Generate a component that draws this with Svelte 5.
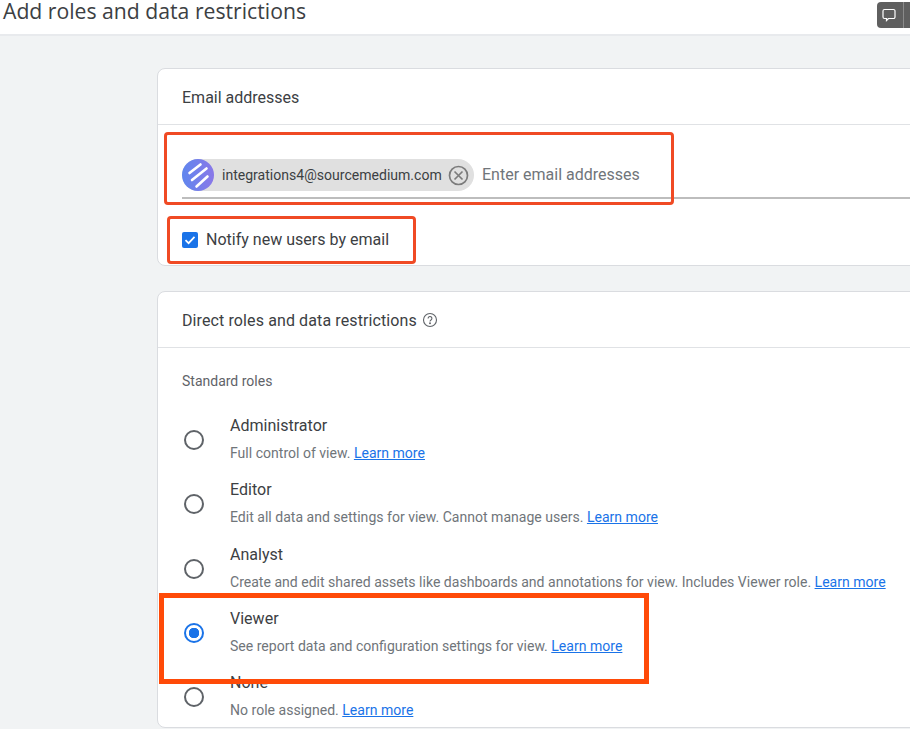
<script>
	const roles = [
		{ name: 'Administrator', desc: 'Full control of view.' },
		{ name: 'Editor', desc: 'Edit all data and settings for view. Cannot manage users.' },
		{
			name: 'Analyst',
			desc: 'Create and edit shared assets like dashboards and annotations for view. Includes Viewer role.'
		},
		{ name: 'Viewer', desc: 'See report data and configuration settings for view.', checked: true },
		{ name: 'None', desc: 'No role assigned.' }
	];
</script>

<div class="page">
	<header class="topbar">
		<h1>Add roles and data restrictions</h1>
		<div class="feedback">
			<svg width="16" height="16" viewBox="0 0 16 16" fill="none" stroke="#fff" stroke-width="1.2">
				<path d="M3.500 2.500h9a1.500 1.500 0 0 1 1.500 1.500v6a1.500 1.500 0 0 1-1.500 1.500H7.500l-2 2v-2h-2A1.500 1.500 0 0 1 2 10V4a1.500 1.500 0 0 1 1.500-1.500z" />
			</svg>
			<span class="divider"></span>
		</div>
	</header>

	<main class="content">
		<section class="card email-card">
			<h2 class="card-head">Email addresses</h2>
			<div class="email-field">
				<div class="chip">
					<span class="avatar">
						<svg width="32" height="32" viewBox="0 0 32 32" stroke="#fff" stroke-width="2.600" stroke-linecap="round">
							<path d="M7.500 14 18.500 5.500M10 21 24.500 9.500M14.500 27.500 25.500 17.500" />
						</svg>
					</span>
					<span class="chip-text">integrations4@sourcemedium.com</span>
					<svg class="chip-x" width="21" height="21" viewBox="0 0 21 21" fill="none" stroke="#7b7b7b" stroke-width="1.700">
						<circle cx="10.500" cy="10.500" r="9" />
						<path d="M6.500 6.500l8 8M14.500 6.500l-8 8" />
					</svg>
				</div>
				<span class="placeholder">Enter email addresses</span>
			</div>
			<label class="notify">
				<span class="checkbox">
					<svg width="16" height="16" viewBox="0 0 16 16" fill="none" stroke="#fff" stroke-width="1.700">
						<path d="M3.500 8.200 6.600 11.200 12.500 4.800" />
					</svg>
				</span>
				Notify new users by email
			</label>
		</section>

		<section class="card roles-card">
			<h2 class="card-head direct">
				Direct roles and data restrictions
				<svg width="16" height="16" viewBox="0 0 16 16" fill="none" stroke="#5f6368" stroke-width="1.100">
					<circle cx="8" cy="8" r="6.500" />
					<path d="M6.100 6.400a1.900 1.900 0 1 1 2.900 1.600c-.7.450-1 .8-1 1.500" />
					<circle cx="8" cy="11.300" r=".4" fill="#5f6368" />
				</svg>
			</h2>
			<div class="roles-body">
				<h3>Standard roles</h3>
				{#each roles as role}
					<div class="role">
						<span class="radio" class:checked={role.checked}></span>
						<div class="role-text">
							<div class="role-name">{role.name}</div>
							<div class="role-desc">{role.desc} <a href="#top">Learn more</a></div>
						</div>
					</div>
				{/each}
			</div>
		</section>
	</main>

	<!-- annotations drawn over the screenshot -->
	<div class="mark mark-email"></div>
	<div class="mark mark-notify"></div>
	<div class="mark mark-viewer"></div>
</div>

<style>
	:global(body) {
		margin: 0;
		background: #f1f3f4;
		font-family: Roboto, 'Liberation Sans', sans-serif;
		color: #3c4043;
	}

	.page {
		position: relative;
		width: 910px;
		height: 729px;
		overflow: hidden;
		background: #f1f3f4;
	}

	.topbar {
		height: 34px;
		background: #fff;
		border-bottom: 2px solid #e8eaed;
		display: flex;
		justify-content: space-between;
		align-items: flex-start;
	}

	h1 {
		margin: 0 0 0 3px;
		font-family: 'Open Sans', sans-serif;
		font-size: 21.2px;
		line-height: 22px;
		font-weight: 400;
		color: #3c4043;
	}

	.feedback {
		width: 33px;
		height: 26px;
		margin-top: 2px;
		background: #5f5f5f;
		border-radius: 4px 0 0 4px;
		display: flex;
		align-items: center;
		padding-left: 4px;
		box-sizing: border-box;
	}

	.divider {
		width: 1px;
		height: 26px;
		margin-left: 6px;
		background: #8a8a8a;
	}

	.content {
		width: 800px;
		margin-left: 157px;
		padding-top: 32px;
		display: flex;
		flex-direction: column;
		gap: 25px;
	}

	.card {
		background: #fff;
		border: 1px solid #dadce0;
		border-radius: 8px;
		box-sizing: border-box;
	}

	.card-head {
		height: 54px;
		margin: 0;
		padding: 1px 0 0 24px;
		display: flex;
		align-items: center;
		gap: 5px;
		font-size: 16px;
		font-weight: 400;
		color: #3c4043;
		border-bottom: 1px solid #e0e2e5;
	}

	.direct {
		letter-spacing: 0.11px;
	}

	.email-card {
		height: 198px;
	}

	.email-field {
		margin: 34px 0 0 24px;
		width: 756px;
		height: 40px;
		border-bottom: 2px solid #bdbdbd;
		display: flex;
		gap: 8px;
		box-sizing: border-box;
	}

	.chip {
		height: 32px;
		width: 292px;
		flex: none;
		border-radius: 16px;
		background: #e0e0e0;
		display: flex;
		align-items: center;
	}

	.avatar {
		width: 32px;
		height: 32px;
		flex: none;
		border-radius: 50%;
		background: linear-gradient(90deg, #5f86ee, #8a78e8);
	}

	.avatar svg {
		display: block;
	}

	.chip-text {
		margin-left: 8px;
		font-size: 14.05px;
		color: #3c4043;
	}

	.chip-x {
		margin-left: 6px;
		flex: none;
	}

	.placeholder {
		line-height: 32px;
		font-size: 16px;
		color: #70757a;
	}

	.notify {
		margin: 31px 0 0 24px;
		display: flex;
		align-items: center;
		gap: 8px;
		font-size: 16.05px;
		color: #3c4043;
	}

	.checkbox {
		width: 16px;
		height: 16px;
		border-radius: 2px;
		background: #1a73e8;
	}

	.checkbox svg {
		display: block;
	}

	.roles-card {
		height: 437px;
	}

	.roles-body {
		padding: 25px 0 0 24px;
	}

	h3 {
		margin: 0 0 19px;
		font-size: 14px;
		line-height: 16px;
		font-weight: 400;
		color: #5f6368;
	}

	.role {
		height: 64.25px;
		display: flex;
		align-items: center;
		gap: 26px;
		padding-left: 2px;
	}

	.radio {
		width: 20px;
		height: 20px;
		flex: none;
		border: 2px solid #5f6368;
		border-radius: 50%;
		box-sizing: border-box;
	}

	.radio.checked {
		border-color: #1a73e8;
		background: radial-gradient(circle, #1a73e8 0 5px, #fff 5.500px);
	}

	.role-text {
		padding-bottom: 3px;
	}

	.role-name {
		font-size: 16.05px;
		line-height: 24px;
		color: #3c4043;
	}

	.role-desc {
		margin-top: 5px;
		font-size: 14.05px;
		line-height: 20px;
		color: #70757a;
		white-space: nowrap;
	}

	.role-desc a {
		color: #1a73e8;
		text-decoration: underline;
	}

	.mark {
		position: absolute;
		box-sizing: border-box;
		pointer-events: none;
	}

	.mark-email {
		left: 164px;
		top: 132px;
		width: 510px;
		height: 73px;
		border: 3px solid #f04a24;
		border-radius: 4px;
	}

	.mark-notify {
		left: 167px;
		top: 216px;
		width: 249px;
		height: 48px;
		border: 3px solid #f04a24;
		border-radius: 4px;
	}

	.mark-viewer {
		left: 159px;
		top: 593px;
		width: 490px;
		height: 91px;
		border: 5px solid #ff4a08;
	}
</style>
